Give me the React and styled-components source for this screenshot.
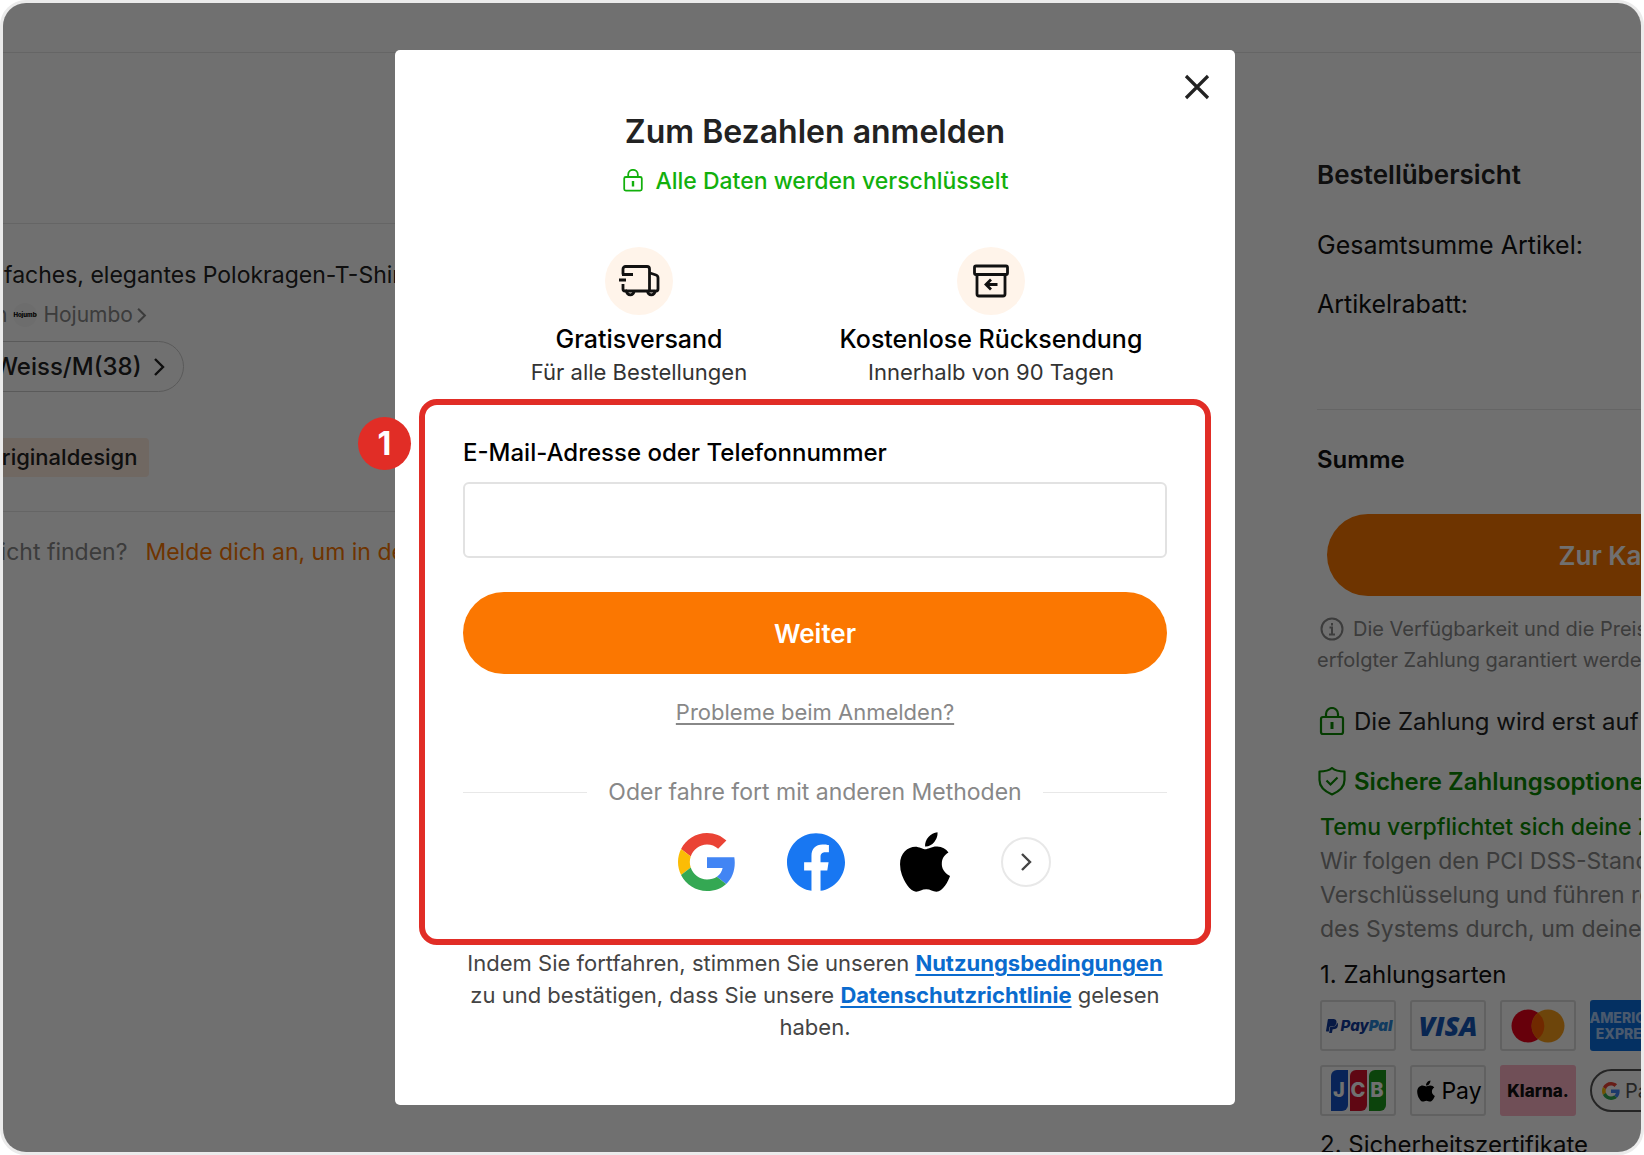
import React from "react";
import styled, { createGlobalStyle } from "styled-components";
import { FaApple, FaPaypal } from "react-icons/fa";

const App = () => {
  return (
    <>
      <GlobalStyle />
      <Frame>
        {/* page behind the dialog */}
        <TopBar />
        <Page>
          <Cart>
            <CartItem>
              <ItemTitle>Einfaches, elegantes Polokragen-T-Shirt</ItemTitle>
              <Vendor href="#vendor">
                <span>von</span>
                <VendorLogo>Hojumbo</VendorLogo>
                <VendorName>
                  Hojumbo
                  <Chevron size={17} />
                </VendorName>
              </Vendor>
              <Variant type="button">
                Weiss/M(38)
                <Chevron size={20} />
              </Variant>
              <Tag>Originaldesign</Tag>
            </CartItem>
            <Hint>
              nicht finden?
              <HintLink href="#login">Melde dich an, um in deinem</HintLink>
            </Hint>
          </Cart>
          <Summary>
            <SummaryTitle>Bestellübersicht</SummaryTitle>
            <SummaryRow>Gesamtsumme Artikel:</SummaryRow>
            <SummaryRow>Artikelrabatt:</SummaryRow>
            <Total>Summe</Total>
            <CheckoutWrap>
              <PillButton type="button">Zur Kasse</PillButton>
            </CheckoutWrap>
            <Note>
              <NoteLine>
                <InfoIcon />
                Die Verfügbarkeit und die Preise
              </NoteLine>
              <NoteLine>erfolgter Zahlung garantiert werden</NoteLine>
            </Note>
            <SafeRow>
              <LockIcon size={30} />
              Die Zahlung wird erst auf der
            </SafeRow>
            <SafeRow $strong>
              <ShieldIcon />
              Sichere Zahlungsoptionen
            </SafeRow>
            <Details>
              <DetailLine $color="#0a8800" $weight={500}>
                Temu verpflichtet sich deine Zahlung
              </DetailLine>
              <DetailLine>Wir folgen den PCI DSS-Standards</DetailLine>
              <DetailLine>Verschlüsselung und führen regelmäßig</DetailLine>
              <DetailLine>des Systems durch, um deine</DetailLine>
              <DetailTitle>1. Zahlungsarten</DetailTitle>
              <Cards>
                <Card>
                  <PayPal>
                    <FaPaypal size={16} />
                    <span>
                      Pay<b>Pal</b>
                    </span>
                  </PayPal>
                </Card>
                <Card>
                  <Visa>VISA</Visa>
                </Card>
                <Card>
                  <MastercardIcon />
                </Card>
                <Card $bg="#0a6fe0">
                  <Amex>
                    <span>AMERICAN</span>
                    <span>EXPRESS</span>
                  </Amex>
                </Card>
                <Card>
                  <Jcb>
                    <JcbBar $bg="#1553c8">J</JcbBar>
                    <JcbBar $bg="#d8102c">C</JcbBar>
                    <JcbBar $bg="#1c9a1c">B</JcbBar>
                  </Jcb>
                </Card>
                <Card>
                  <Pay>
                    <FaApple size={24} />
                    Pay
                  </Pay>
                </Card>
                <Card $bg="#ffb3c7">
                  <Klarna>Klarna.</Klarna>
                </Card>
                <GooglePay>
                  <GoogleIcon size={18} />
                  Pay
                </GooglePay>
              </Cards>
              <DetailTitle>2. Sicherheitszertifikate</DetailTitle>
            </Details>
          </Summary>
        </Page>

        <Overlay>
          <Modal role="dialog" aria-labelledby="login-title">
            <Close type="button" aria-label="Schließen">
              <CloseIcon />
            </Close>
            <Title id="login-title">Zum Bezahlen anmelden</Title>
            <Encrypted>
              <LockIcon size={24} />
              Alle Daten werden verschlüsselt
            </Encrypted>
            <Benefits>
              <Benefit>
                <BenefitIcon>
                  <TruckIcon />
                </BenefitIcon>
                <BenefitTitle>Gratisversand</BenefitTitle>
                <BenefitText>Für alle Bestellungen</BenefitText>
              </Benefit>
              <Benefit>
                <BenefitIcon>
                  <ReturnIcon />
                </BenefitIcon>
                <BenefitTitle>Kostenlose Rücksendung</BenefitTitle>
                <BenefitText>Innerhalb von 90 Tagen</BenefitText>
              </Benefit>
            </Benefits>

            <LoginForm onSubmit={(e) => e.preventDefault()}>
              <Step>1</Step>
              <Label htmlFor="account">E-Mail-Adresse oder Telefonnummer</Label>
              <Input id="account" type="text" />
              <PillButton type="submit">Weiter</PillButton>
              <Help href="#help">Probleme beim Anmelden?</Help>
              <Divider>Oder fahre fort mit anderen Methoden</Divider>
              <Socials>
                <Social type="button" aria-label="Google">
                  <GoogleIcon size={58} />
                </Social>
                <Social type="button" aria-label="Facebook">
                  <FacebookIcon />
                </Social>
                <Social type="button" aria-label="Apple">
                  <FaApple size={68} />
                </Social>
                <More type="button" aria-label="Mehr">
                  <Chevron size={20} />
                </More>
              </Socials>
            </LoginForm>

            <Legal>
              Indem Sie fortfahren, stimmen Sie unseren{" "}
              <a href="#terms">Nutzungsbedingungen</a> zu und bestätigen, dass
              Sie unsere <a href="#privacy">Datenschutzrichtlinie</a> gelesen
              haben.
            </Legal>
          </Modal>
        </Overlay>
      </Frame>
    </>
  );
};

export default App;

/* icons */
const Chevron = ({ size }) => (
  <svg width={size} height={size} viewBox="0 0 20 20" fill="none">
    <path d="M6 2l8 8-8 8" stroke="currentColor" strokeWidth="2.4" />
  </svg>
);

const CloseIcon = () => (
  <svg width="26" height="26" viewBox="0 0 26 26" fill="none">
    <path d="M2 2l22 22M24 2L2 24" stroke="#222" strokeWidth="3.2" />
  </svg>
);

const LockIcon = ({ size }) => (
  <svg width={size} height={size} viewBox="0 0 30 30" fill="none">
    <rect x="4" y="10" width="22" height="17" rx="2" stroke="currentColor" strokeWidth="2.2" />
    <path d="M9 10V7a6 6 0 0 1 12 0v3" stroke="currentColor" strokeWidth="2.2" />
    <path d="M15 15v7" stroke="currentColor" strokeWidth="3" />
  </svg>
);

const ShieldIcon = () => (
  <svg width="30" height="30" viewBox="0 0 30 30" fill="none">
    <path
      d="M15 1c3 2.500 7 3.500 12.500 3.500V13c0 7-5.500 11.500-12.500 14.500C8 24.500 2.500 20 2.500 13V4.500C8 4.500 12 3.500 15 1z"
      stroke="currentColor"
      strokeWidth="2.2"
      strokeLinejoin="round"
    />
    <path d="M9.500 13.500l4 4 7-7" stroke="currentColor" strokeWidth="2.2" />
  </svg>
);

const InfoIcon = () => (
  <svg width="26" height="26" viewBox="0 0 26 26" fill="none">
    <circle cx="13" cy="12" r="10.500" stroke="currentColor" strokeWidth="2" />
    <path d="M13 6v2.500M10.500 10.500H13V17M10 17.500h6" stroke="currentColor" strokeWidth="2" />
  </svg>
);

const TruckIcon = () => (
  <svg width="42" height="34" viewBox="0 0 42 34" fill="none" stroke="#111" strokeWidth="2.800">
    <path d="M5 10.500V5a2.500 2.500 0 0 1 2.500-2.500H29a2.500 2.500 0 0 1 2.500 2.500v22M4 10.500h11M1 16h7M5 20v5a2 2 0 0 0 2 2h2" />
    <path d="M32 9l6 2a3 3 0 0 1 2 3v11a2 2 0 0 1-2 2" />
    <path d="M8.500 27a3.800 3.800 0 0 0 7.600 0zM16 27h14M29.500 27a3.800 3.800 0 0 0 7.600 0z" strokeLinejoin="round" />
  </svg>
);

const ReturnIcon = () => (
  <svg width="36" height="34" viewBox="0 0 36 34" fill="none" stroke="#111" strokeWidth="2.800">
    <rect x="1.500" y="2" width="33" height="8.500" rx="1.500" />
    <path d="M4 10v20a2 2 0 0 0 2 2h24a2 2 0 0 0 2-2V10" />
    <path d="M24.500 20.500H13M18 15.500l-5 5 5 5" />
  </svg>
);

const GoogleIcon = ({ size }) => (
  <svg width={size} height={size} viewBox="0 0 48 48">
    <path fill="#ea4335" d="M24 9.500c3.540 0 6.710 1.220 9.210 3.600l6.850-6.850C35.900 2.380 30.470 0 24 0 14.620 0 6.510 5.380 2.560 13.220l7.980 6.190C12.430 13.720 17.740 9.500 24 9.500z" />
    <path fill="#4285f4" d="M46.980 24.550c0-1.570-.15-3.090-.38-4.550H24v9.020h12.940c-.58 2.960-2.260 5.480-4.780 7.180l7.730 6c4.510-4.180 7.090-10.360 7.090-17.650z" />
    <path fill="#fbbc05" d="M10.530 28.590c-.48-1.450-.76-2.990-.76-4.590s.27-3.140.76-4.590l-7.980-6.190C.92 16.460 0 20.120 0 24c0 3.880.92 7.540 2.560 10.780l7.970-6.190z" />
    <path fill="#34a853" d="M24 48c6.480 0 11.930-2.130 15.890-5.810l-7.730-6c-2.150 1.450-4.920 2.300-8.160 2.300-6.260 0-11.570-4.220-13.470-9.910l-7.980 6.190C6.510 42.620 14.620 48 24 48z" />
  </svg>
);

const FacebookIcon = () => (
  <svg width="58" height="58" viewBox="0 0 24 24">
    <path fill="#1877f2" d="M24 12.073c0-6.627-5.373-12-12-12s-12 5.373-12 12c0 5.990 4.388 10.954 10.125 11.854v-8.385H7.078v-3.470h3.047V9.430c0-3.007 1.792-4.669 4.533-4.669 1.312 0 2.686.235 2.686.235v2.953H15.830c-1.491 0-1.956.925-1.956 1.874v2.250h3.328l-.532 3.470h-2.796v8.385C19.612 23.027 24 18.062 24 12.073z" />
  </svg>
);

const MastercardIcon = () => (
  <svg width="54" height="34" viewBox="0 0 54 34">
    <circle cx="17" cy="17" r="16.500" fill="#eb001b" />
    <circle cx="37" cy="17" r="16.500" fill="#f79e1b" />
    <path d="M27 4a16.500 16.500 0 0 1 0 26 16.500 16.500 0 0 1 0-26z" fill="#ff5f00" />
  </svg>
);

const GlobalStyle = createGlobalStyle`
  * {
    box-sizing: border-box;
  }
  body {
    margin: 0;
    background: #fff;
    font-family: Inter, "Liberation Sans", sans-serif;
  }
  h1, h2, h3, p {
    margin: 0;
  }
  button, input {
    font-family: inherit;
  }
  svg {
    display: block;
    flex-shrink: 0;
  }
`;

const Frame = styled.div`
  position: relative;
  height: 100vh;
  overflow: hidden;
  border: 3px solid #ebebeb;
  border-radius: 26px;
  background: #fff;
`;

/* cart page */
const TopBar = styled.header`
  height: 50px;
  border-bottom: 1px solid #e5e5e5;
`;
const Page = styled.div`
  display: flex;
  gap: 100px;
  white-space: nowrap;
`;
const Cart = styled.main`
  flex: 1;
  min-width: 0;
  margin-left: -32px;
  padding-top: 170px;
`;
const CartItem = styled.section`
  display: flex;
  flex-direction: column;
  align-items: flex-start;
  height: 289px;
  padding-top: 34px;
  border-top: 1px solid #e5e5e5;
  border-bottom: 1px solid #e5e5e5;
`;
const ItemTitle = styled.p`
  color: #222;
  font-size: 23px;
  line-height: 34px;
`;
const Vendor = styled.a`
  display: flex;
  align-items: center;
  gap: 6px;
  margin-top: 8px;
  color: #888;
  font-size: 21px;
  line-height: 30px;
  text-decoration: none;
`;
const VendorLogo = styled.span`
  width: 24px;
  height: 24px;
  border-radius: 50%;
  background: #f8f8f8;
  color: #000;
  font-size: 6px;
  font-weight: 800;
  line-height: 24px;
  text-align: center;
  overflow: hidden;
`;
const VendorName = styled.span`
  display: flex;
  align-items: center;
`;
const Variant = styled.button`
  display: flex;
  align-items: center;
  gap: 8px;
  height: 51px;
  margin-top: 11px;
  padding: 0 14px 0 22px;
  border: 1px solid #ccc;
  border-radius: 26px;
  background: transparent;
  color: #222;
  font-size: 24px;
  font-weight: 500;
`;
const Tag = styled.span`
  margin-top: 46px;
  padding: 0 12px 0 14px;
  border-radius: 4px;
  background: #ffece0;
  color: #222;
  font-size: 22px;
  font-weight: 500;
  line-height: 39px;
`;
const Hint = styled.p`
  display: flex;
  gap: 18px;
  padding: 23px 0 0 16px;
  color: #888;
  font-size: 23px;
  line-height: 34px;
`;
const HintLink = styled.a`
  color: #fb7701;
  text-decoration: none;
`;

/* order summary */
const Summary = styled.aside`
  flex: 0 0 324px;
  min-width: 0;
  padding-top: 105px;
`;
const SummaryTitle = styled.h2`
  margin-bottom: 36px;
  color: #222;
  font-size: 26px;
  font-weight: 600;
  line-height: 34px;
`;
const SummaryRow = styled.p`
  margin-bottom: 25px;
  color: #111;
  font-size: 25px;
  line-height: 34px;
`;
const Total = styled.p`
  width: 610px;
  margin-top: 88px;
  padding-top: 33px;
  border-top: 1px solid #e5e5e5;
  color: #111;
  font-size: 24px;
  font-weight: 600;
  line-height: 34px;
`;
const CheckoutWrap = styled.div`
  width: 610px;
  margin-top: 37px;
  padding: 0 10px;
`;
const PillButton = styled.button`
  width: 100%;
  height: 82px;
  border: 0;
  border-radius: 41px;
  background: #fb7701;
  color: #fff;
  font-size: 26px;
  font-weight: 600;
  cursor: pointer;
`;
const Note = styled.div`
  margin-top: 18px;
  padding-bottom: 3px;
  color: #888;
  font-size: 20px;
  line-height: 31px;
`;
const NoteLine = styled.p`
  display: flex;
  align-items: center;
  gap: 8px;
  svg {
    margin-left: 2px;
  }
`;
const SafeRow = styled.p`
  display: flex;
  align-items: center;
  gap: 7px;
  margin-top: 26px;
  color: ${({ $strong }) => ($strong ? "#0a8800" : "#222")};
  font-size: 24px;
  font-weight: ${({ $strong }) => ($strong ? 600 : 400)};
  line-height: 34px;
  svg {
    color: #0a8800;
  }
`;
const Details = styled.div`
  margin-top: 11px;
  padding-left: 3px;
`;
const DetailLine = styled.p`
  color: ${({ $color }) => $color || "#888"};
  font-size: 23px;
  font-weight: ${({ $weight }) => $weight || 400};
  line-height: 34px;
`;
const DetailTitle = styled.h3`
  margin: 12px 0 8px;
  color: #111;
  font-size: 24px;
  font-weight: 400;
  line-height: 34px;
`;
const Cards = styled.div`
  display: grid;
  grid-template-columns: repeat(4, 76px);
  gap: 14px;
`;
const Card = styled.div`
  display: flex;
  align-items: center;
  justify-content: center;
  height: 51px;
  overflow: hidden;
  border: ${({ $bg }) => ($bg ? "0" : "2px solid #ddd")};
  border-radius: 3px;
  background: ${({ $bg }) => $bg || "#fff"};
`;
const PayPal = styled.div`
  display: flex;
  align-items: center;
  gap: 1px;
  color: #113a9c;
  font-size: 15px;
  font-style: italic;
  font-weight: 800;
  b {
    color: #2b86d9;
  }
`;
const Visa = styled.span`
  color: #1658b8;
  font-family: "Open Sans", sans-serif;
  font-size: 27px;
  font-style: italic;
  font-weight: 800;
`;
const Amex = styled.div`
  display: flex;
  flex-direction: column;
  align-items: center;
  color: #a8cbf7;
  font-size: 14px;
  font-weight: 800;
  line-height: 16px;
`;
const Jcb = styled.div`
  display: flex;
  gap: 2px;
`;
const JcbBar = styled.span`
  width: 17px;
  height: 41px;
  border-radius: 6px 0 6px 0;
  background: ${({ $bg }) => $bg};
  color: #fff;
  font-size: 20px;
  font-weight: 800;
  line-height: 41px;
  text-align: center;
`;
const Pay = styled.div`
  display: flex;
  align-items: center;
  gap: 3px;
  color: #000;
  font-size: 23px;
`;
const Klarna = styled.span`
  color: #111;
  font-size: 17px;
  font-weight: 800;
`;
const GooglePay = styled.div`
  display: flex;
  align-items: center;
  gap: 5px;
  height: 43px;
  margin-top: 4px;
  padding-left: 10px;
  border: 2px solid #555;
  border-radius: 22px;
  color: #555;
  font-size: 20px;
`;

/* login dialog */
const Overlay = styled.div`
  position: absolute;
  inset: 0;
  display: flex;
  align-items: center;
  justify-content: center;
  padding-right: 14px;
  background: rgba(0, 0, 0, 0.56);
`;
const Modal = styled.div`
  position: relative;
  display: flex;
  flex-direction: column;
  align-items: center;
  width: 840px;
  max-width: 100%;
  padding: 62px 24px;
  border-radius: 5px;
  background: #fff;
`;
const Close = styled.button`
  position: absolute;
  top: 24px;
  right: 25px;
  padding: 0;
  border: 0;
  background: none;
  cursor: pointer;
`;
const Title = styled.h1`
  color: #222;
  font-size: 32px;
  font-weight: 600;
  line-height: 40px;
`;
const Encrypted = styled.p`
  display: flex;
  align-items: center;
  gap: 10px;
  margin-top: 13px;
  color: #12b00c;
  font-size: 23px;
  font-weight: 500;
  line-height: 32px;
`;
const Benefits = styled.div`
  display: grid;
  grid-template-columns: 1fr 1fr;
  width: 704px;
  max-width: 100%;
  margin-top: 50px;
`;
const Benefit = styled.div`
  display: flex;
  flex-direction: column;
  align-items: center;
`;
const BenefitIcon = styled.div`
  display: flex;
  align-items: center;
  justify-content: center;
  width: 68px;
  height: 68px;
  border-radius: 50%;
  background: #fff4ea;
`;
const BenefitTitle = styled.h2`
  margin-top: 7px;
  color: #000;
  font-size: 25px;
  font-weight: 500;
  line-height: 34px;
`;
const BenefitText = styled.p`
  color: #333;
  font-size: 22px;
  line-height: 32px;
`;
const LoginForm = styled.form`
  position: relative;
  display: flex;
  flex-direction: column;
  align-items: center;
  width: 100%;
  margin-top: 11px;
  padding: 32px 38px 46px;
  border: 6px solid #e12d26;
  border-radius: 18px;
`;
const Step = styled.span`
  position: absolute;
  top: 12px;
  left: -67px;
  width: 53px;
  height: 53px;
  border-radius: 50%;
  background: #e12d26;
  color: #fff;
  font-size: 32px;
  font-weight: 700;
  line-height: 53px;
  text-align: center;
`;
const Label = styled.label`
  align-self: flex-start;
  color: #000;
  font-size: 24px;
  font-weight: 500;
  line-height: 32px;
`;
const Input = styled.input`
  width: 100%;
  height: 76px;
  margin: 13px 0 34px;
  padding: 0 20px;
  border: 2px solid #e2e2e2;
  border-radius: 6px;
  font-size: 24px;
`;
const Help = styled.a`
  margin-top: 22px;
  color: #888;
  font-size: 22px;
  line-height: 32px;
  text-underline-offset: 3px;
`;
const Divider = styled.div`
  display: flex;
  align-items: center;
  gap: 21px;
  width: 100%;
  margin-top: 48px;
  color: #888;
  font-size: 23px;
  line-height: 32px;
  white-space: nowrap;
  &::before,
  &::after {
    content: "";
    flex: 1;
    height: 1px;
    background: #e8e8e8;
  }
`;
const Socials = styled.div`
  display: flex;
  align-items: center;
  gap: 43px;
  height: 62px;
  margin-top: 23px;
  padding-left: 95px;
`;
const Social = styled.button`
  display: flex;
  align-items: center;
  justify-content: center;
  width: 66px;
  height: 62px;
  padding: 0;
  border: 0;
  background: none;
  color: #000;
  cursor: pointer;
`;
const More = styled(Social)`
  width: 50px;
  height: 50px;
  border: 2px solid #e8e8e8;
  border-radius: 50%;
  color: #444;
`;
const Legal = styled.p`
  width: 704px;
  max-width: 100%;
  margin-top: 2px;
  color: #444;
  font-size: 22px;
  line-height: 32px;
  text-align: center;
  a {
    color: #0a6bce;
    font-weight: 700;
    text-underline-offset: 3px;
  }
`;
